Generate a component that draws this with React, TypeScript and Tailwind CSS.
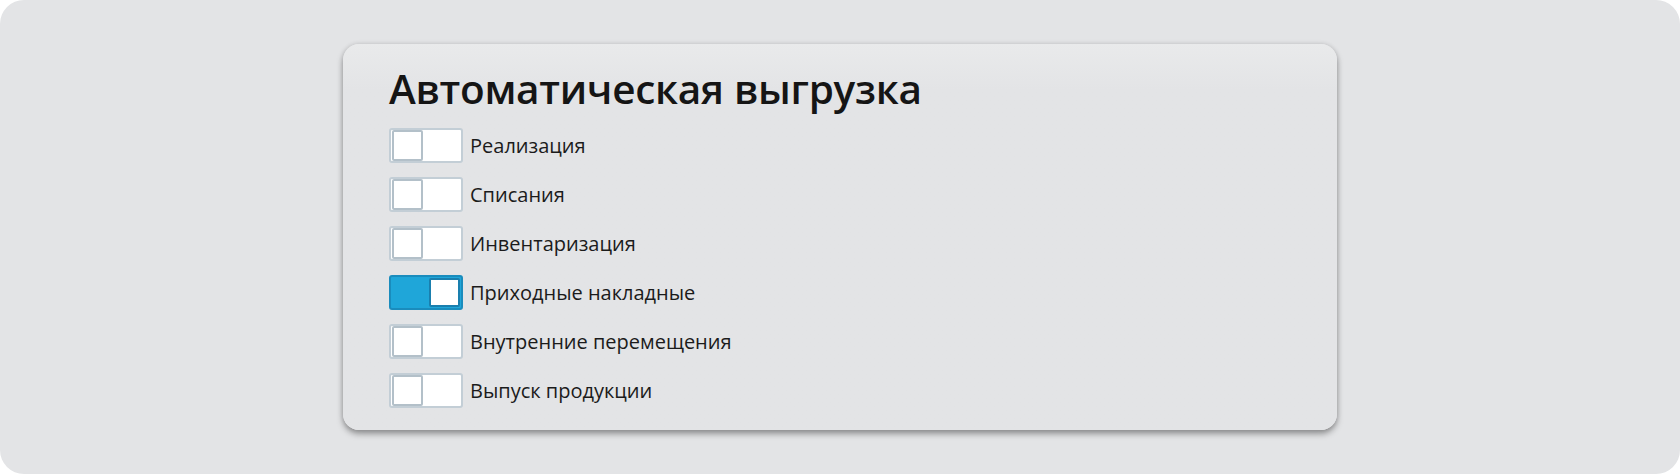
import React, { useState } from 'react';

const items = [
  { id: 1, label: 'Реализация', on: false },
  { id: 2, label: 'Списания', on: false },
  { id: 3, label: 'Инвентаризация', on: false },
  { id: 4, label: 'Приходные накладные', on: true },
  { id: 5, label: 'Внутренние перемещения', on: false },
  { id: 6, label: 'Выпуск продукции', on: false },
];

const Toggle = ({ on, onClick }: { on: boolean; onClick: () => void }) => (
  <button
    onClick={onClick}
    className={
      on
        ? 'flex h-[35px] w-[74px] shrink-0 items-center justify-end rounded-[3px] border-2 border-[#1a8cbd] bg-[#1fa6d9] px-[1px]'
        : 'flex h-[35px] w-[74px] shrink-0 items-center justify-start rounded-[3px] border-2 border-[#c3ced6] bg-white px-[1px]'
    }
  >
    <span
      className={
        on
          ? 'h-[29px] w-[31px] rounded-[2px] border-2 border-[#1a7fae] bg-white'
          : 'h-[31px] w-[31px] rounded-[2px] border-2 border-[#b3c0c9] bg-white'
      }
    />
  </button>
);

export default function App() {
  const [state, setState] = useState(items);

  // flip one switch
  const flip = (id: number) =>
    setState((s) => s.map((i) => (i.id === id ? { ...i, on: !i.on } : i)));

  return (
    <div className="h-[474px] w-[1680px] bg-white">
      <div
        className="h-full w-full overflow-hidden rounded-[24px] bg-[#e3e4e6] pt-[44px] pl-[343px]"
        style={{ fontFamily: '"Open Sans", "Noto Sans", sans-serif' }}
      >
        <div className="h-[386px] w-[994px] rounded-[16px] bg-gradient-to-b from-[#e9eaeb] to-[#e3e4e6] to-[12%] pt-[19px] pl-[46px] shadow-[0_4px_6px_rgba(0,0,0,0.35),0_0_5px_rgba(0,0,0,0.12)]">
          <h1 className="text-[40.5px] leading-[52px] font-semibold tracking-[-0.3px] text-[#151515]">
            Автоматическая выгрузка
          </h1>
          <div className="mt-[13px] flex flex-col gap-[14px]">
            {state.map(({ id, label, on }) => (
              <div key={id} className="flex items-center gap-[7px]">
                <Toggle on={on} onClick={() => flip(id)} />
                <span className="text-[20px] leading-none text-[#1b1b1b]">{label}</span>
              </div>
            ))}
          </div>
        </div>
      </div>
    </div>
  );
}
